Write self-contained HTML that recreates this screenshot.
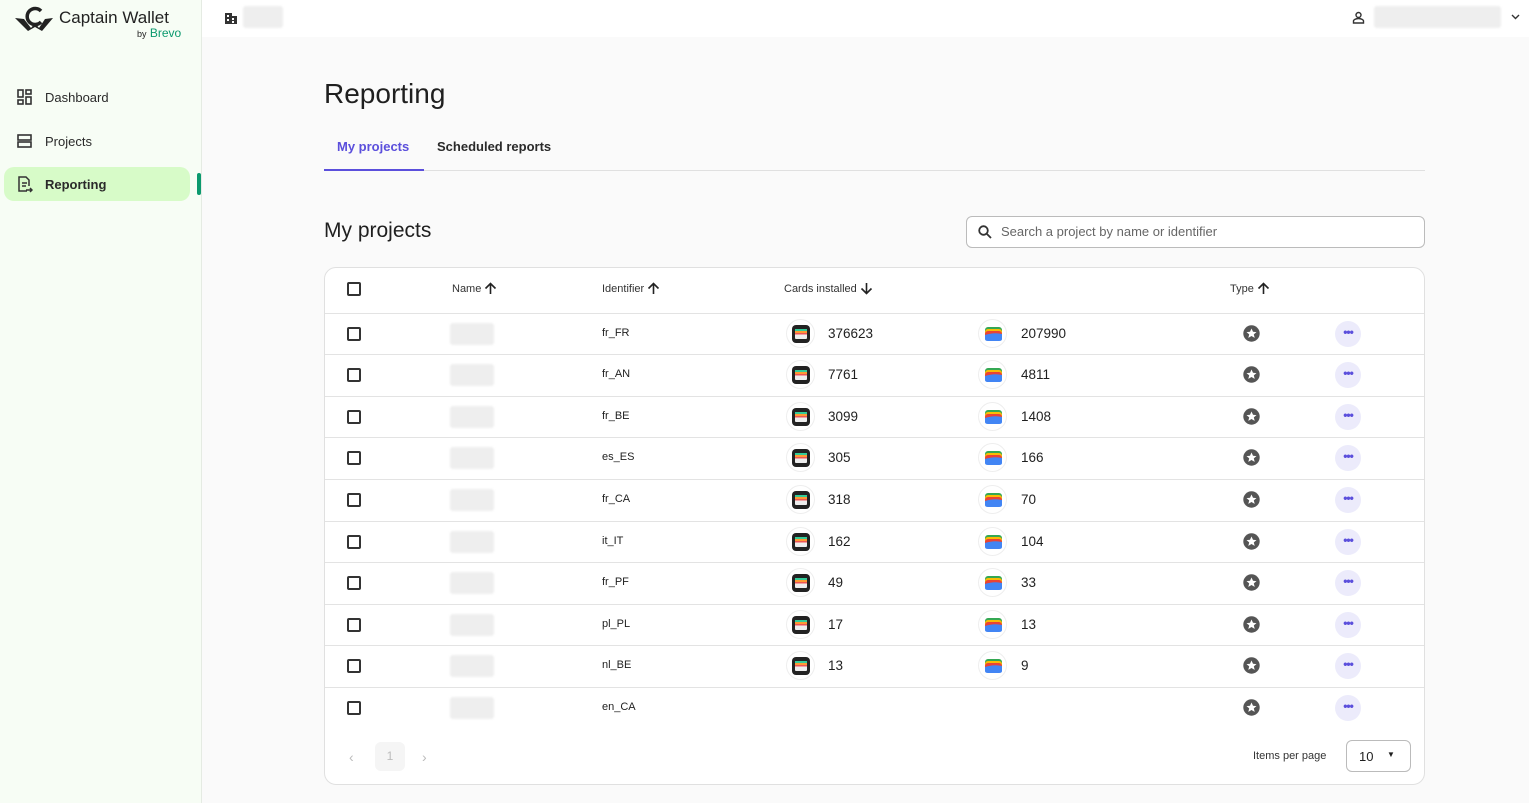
<!DOCTYPE html>
<html><head><meta charset="utf-8"><style>
*{box-sizing:border-box;margin:0;padding:0}
body{width:1529px;height:803px;overflow:hidden;background:#fafafa;font-family:"Liberation Sans",sans-serif;color:#1f1f1f;position:relative}
.side{position:absolute;left:0;top:0;width:202px;height:803px;background:#f7fdf5;border-right:1px solid #e5ebe3}
.top{position:absolute;left:202px;top:0;right:0;height:37px;background:#fff}
.nav{position:absolute;left:4px;width:186px;height:34px;display:flex;align-items:center;font-size:13px;color:#2a2a2a}
.nav svg{margin-left:13px;margin-right:12px}
.blur{background:#eeeeee;border-radius:3px;filter:blur(1px)}
.abs{position:absolute}
.tbl{position:absolute;left:324px;top:267px;width:1101px;height:518px;background:#fff;border:1px solid #e0e0e0;border-radius:12px}
.row{position:absolute;left:0;width:1099px;height:42px;border-top:1px solid #e3e3e3;font-size:11px}
.cb{position:absolute;left:22px;top:13px;width:14px;height:14px;border:2px solid #333;border-radius:2px}
.nm{position:absolute;left:125px;top:9px;width:44px;height:22px}
.id{position:absolute;left:277px;top:13px}
.ic{position:absolute;top:5px;width:29px;height:29px;border-radius:50%;border:1px solid #eee;background:#fff}
.num{position:absolute;top:12px;font-size:13.5px}
.star{position:absolute;left:918px;top:11px}
.dots{position:absolute;left:1010px;top:7px;width:26px;height:26px;border-radius:50%;background:#ecebfb;color:#5b4fdc;text-align:center;font-size:12px;line-height:22px;font-weight:bold;letter-spacing:-1px}
.hd{position:absolute;top:14px;font-size:11px;color:#333;display:flex;align-items:center;gap:3px}
</style></head><body>
<div class="side">
 <svg class="abs" style="left:14px;top:6px" width="40" height="26" viewBox="0 0 40 26"><path d="M27 5 A8 8 0 1 0 27 16" fill="none" stroke="#222" stroke-width="3.5"/><path d="M1 12 L10 13 L17 22 L21 17 L25 22 L31 13 L39 12 L28 25 L21 21 L14 25 Z" fill="#222"/></svg>
 <div class="abs" style="left:59px;top:8px;font-size:17px;color:#222">Captain Wallet</div>
 <div class="abs" style="left:137px;top:26px;font-size:12px;color:#0b996e"><span style="font-size:9px;color:#222">by</span> Brevo</div>
 <div class="nav" style="top:80px"><svg width="16" height="16" viewBox="0 0 16 16" fill="none" stroke="#333" stroke-width="1.6"><rect x="1" y="1" width="5" height="7"/><rect x="9" y="1" width="5" height="4"/><rect x="1" y="11" width="5" height="4"/><rect x="9" y="8" width="5" height="7"/></svg>Dashboard</div>
 <div class="nav" style="top:124px"><svg width="16" height="16" viewBox="0 0 16 16" fill="none" stroke="#333" stroke-width="1.6"><rect x="1" y="2" width="13" height="5"/><rect x="1" y="9" width="13" height="5"/></svg>Projects</div>
 <div class="nav" style="top:167px;background:#d7fbc8;border-radius:10px;font-weight:bold"><svg width="16" height="17" viewBox="0 0 16 17" fill="none" stroke="#333" stroke-width="1.5"><path d="M10 15H2V1h7l3 3v6"/><path d="M5 7h5M5 10h4M9 14h6M13 12l2 2-2 2"/></svg>Reporting</div>
 <div class="abs" style="left:197px;top:173px;width:4px;height:22px;background:#0b996e;border-radius:2px"></div>
</div>
<div class="top">
 <svg class="abs" style="left:23px;top:12px" width="12" height="12" viewBox="0 0 12 12" fill="#333"><path d="M0 1h7v3h5v8H0zM2 3v2h2V3zm0 4v2h2V7zm5-1v2h2V6zm0 3v2h2V9z"/></svg>
 <div class="abs blur" style="left:41px;top:6px;width:40px;height:22px"></div>
 <svg class="abs" style="left:1150px;top:11px" width="13" height="13" viewBox="0 0 13 13" fill="none" stroke="#333" stroke-width="1.4"><circle cx="6.5" cy="4" r="2.5"/><path d="M1.5 12v-2c0-1 2-2.5 5-2.5s5 1.5 5 2.5v2z"/></svg>
 <div class="abs blur" style="left:1172px;top:6px;width:127px;height:22px"></div>
 <svg class="abs" style="left:1309px;top:14px" width="9" height="6" viewBox="0 0 9 6" fill="none" stroke="#333" stroke-width="1.4"><path d="M1 1l3.5 3.5L8 1"/></svg>
</div>
<div class="abs" style="left:324px;top:78px;font-size:28px;color:#1f1f1f">Reporting</div>
<div class="abs" style="left:337px;top:139px;font-size:13px;color:#5b4fdc;font-weight:bold">My projects</div>
<div class="abs" style="left:437px;top:139px;font-size:13px;color:#2a2a2a;font-weight:bold">Scheduled reports</div>
<div class="abs" style="left:324px;top:170px;width:1101px;height:1px;background:#e0e0e0"></div>
<div class="abs" style="left:324px;top:169px;width:100px;height:2px;background:#5b4fdc"></div>
<div class="abs" style="left:324px;top:219px;font-size:21px">My projects</div>
<div class="abs" style="left:966px;top:216px;width:459px;height:32px;border:1px solid #bbb;border-radius:6px;background:#fff;font-size:13px;color:#666;padding:7px 0 0 34px">Search a project by name or identifier
 <svg class="abs" style="left:11px;top:8px" width="14" height="14" viewBox="0 0 14 14" fill="none" stroke="#333" stroke-width="1.8"><circle cx="5.5" cy="5.5" r="4.3"/><path d="M8.7 8.7 13 13"/></svg></div>
<div class="tbl">
 <div class="cb" style="top:14px"></div>
 <div class="hd" style="left:127px">Name <svg width="13" height="13" viewBox="0 0 13 13" fill="none" stroke="#222" stroke-width="1.6"><path d="M6.5 12V1.5M1.5 6.5l5-5 5 5"/></svg></div>
 <div class="hd" style="left:277px">Identifier <svg width="13" height="13" viewBox="0 0 13 13" fill="none" stroke="#222" stroke-width="1.6"><path d="M6.5 12V1.5M1.5 6.5l5-5 5 5"/></svg></div>
 <div class="hd" style="left:459px">Cards installed <svg width="13" height="13" viewBox="0 0 13 13" fill="none" stroke="#222" stroke-width="1.6"><path d="M6.5 1V11.5M1.5 6.5l5 5 5-5"/></svg></div>
 <div class="hd" style="left:905px">Type <svg width="13" height="13" viewBox="0 0 13 13" fill="none" stroke="#222" stroke-width="1.6"><path d="M6.5 12V1.5M1.5 6.5l5-5 5 5"/></svg></div>
 <div id="rows"></div>
 <div class="abs" style="left:24px;top:481px;color:#bbb;font-size:14px">‹</div>
 <div class="abs" style="left:50px;top:474px;width:30px;height:29px;background:#f5f5f5;border-radius:6px;color:#bbb;font-size:12px;text-align:center;line-height:29px">1</div>
 <div class="abs" style="left:97px;top:481px;color:#bbb;font-size:14px">›</div>
 <div class="abs" style="left:928px;top:482px;font-size:11px;color:#333">Items per page</div>
 <div class="abs" style="left:1021px;top:472px;width:65px;height:32px;border:1px solid #bbb;border-radius:6px;font-size:13px;padding:8px 0 0 12px">10<span style="position:absolute;left:40px;top:9px;font-size:8px">▼</span></div>
</div>
<script>
const d=[["fr_FR","376623","207990"],["fr_AN","7761","4811"],["fr_BE","3099","1408"],["es_ES","305","166"],["fr_CA","318","70"],["it_IT","162","104"],["fr_PF","49","33"],["pl_PL","17","13"],["nl_BE","13","9"],["en_CA","",""]];
const tops=[45,86,128,169,211,253,294,336,377,419];
const apple='<svg style="position:absolute;left:5px;top:5px" width="18" height="18" viewBox="0 0 18 18"><rect x="0" y="0" width="18" height="18" rx="4" fill="#222"/><rect x="3" y="4" width="12" height="10" rx="1" fill="#eee"/><rect x="3" y="4" width="12" height="2" fill="#3c9"/><rect x="3" y="6" width="12" height="2" fill="#f93"/><rect x="3" y="8" width="12" height="1.5" fill="#e55"/></svg>';
const goog='<svg style="position:absolute;left:5px;top:5px" width="19" height="18" viewBox="0 0 19 18"><rect x="1" y="2" width="17" height="8" rx="3" fill="#34a853"/><rect x="1" y="4" width="17" height="8" rx="3" fill="#fbbc04"/><rect x="1" y="6" width="17" height="8" rx="3" fill="#ea4335"/><path d="M1 10 Q10 7 18 9 V14 Q18 16 15 16 H4 Q1 16 1 14Z" fill="#4285f4"/></svg>';
const star='<svg width="17" height="17" viewBox="0 0 17 17"><circle cx="8.5" cy="8.5" r="8.2" fill="#555"/><path d="M8.5 3.5l1.5 3.3 3.5.3-2.7 2.3.9 3.5-3.2-1.9-3.2 1.9.9-3.5-2.7-2.3 3.5-.3z" fill="#fff"/></svg>';
let h='';
d.forEach((r,i)=>{h+=`<div class="row" style="top:${tops[i]}px"><div class="cb"></div><div class="nm blur"></div><div class="id">${r[0]}</div>`+
(r[1]?`<div class="ic" style="left:461px">${apple}</div><div class="num" style="left:503px">${r[1]}</div><div class="ic" style="left:653px">${goog}</div><div class="num" style="left:696px">${r[2]}</div>`:'')+
`<div class="star">${star}</div><div class="dots">•••</div></div>`});
document.getElementById('rows').innerHTML=h;
</script>
</body></html>
